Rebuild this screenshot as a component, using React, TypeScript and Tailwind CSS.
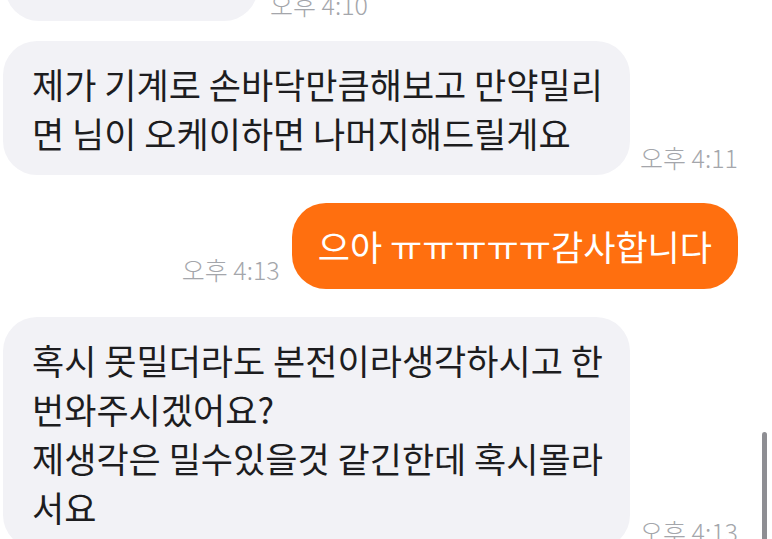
import type { ReactNode } from 'react';

/** Timestamp shown next to a chat bubble */
function Time({ children }: { children: ReactNode }) {
  return (
    <span className="text-[25px] font-light leading-none text-[#a4a6ab] whitespace-nowrap">
      {children}
    </span>
  );
}

/** Incoming (gray) bubble, lines are given explicitly */
function Incoming({ lines, time }: { lines: string[]; time: string }) {
  return (
    <div className="flex items-end gap-[10px] pl-[3px]">
      <div className="w-[627px] shrink-0 rounded-[34px] bg-[#f2f2f6] px-[29px] py-[18px] text-[35px] leading-[49px] text-[#1d1d1f]">
        {lines.map((l, i) => (
          <div key={i} className="whitespace-nowrap">{l}</div>
        ))}
      </div>
      <div className="pb-[2px]">
        <Time>{time}</Time>
      </div>
    </div>
  );
}

/** Outgoing (orange) bubble */
function Outgoing({ text, time }: { text: string; time: string }) {
  return (
    <div className="flex items-end justify-end gap-[12px] pr-[34px]">
      <div className="pb-[4px]">
        <Time>{time}</Time>
      </div>
      <div className="rounded-[34px] bg-[#ff6f0f] px-[26px] py-[18px] text-[35px] leading-[50px] text-white whitespace-nowrap">
        {text}
      </div>
    </div>
  );
}

export default function App() {
  return (
    <div
      className="relative h-[539px] w-[772px] overflow-hidden bg-white"
      style={{ fontFamily: '"Noto Sans CJK KR", "Noto Sans", sans-serif' }}
    >
      <div className="flex flex-col">
        {/* previous message, mostly scrolled away */}
        <div className="-mt-[60px] flex items-end gap-[12px] pl-[5px]">
          <div className="h-[81px] w-[253px] rounded-[34px] bg-[#f2f2f6]" />
          <div className="pb-[1px]">
            <Time>오후 4:10</Time>
          </div>
        </div>

        <div className="mt-[20px]">
          <Incoming
            lines={['제가 기계로 손바닥만큼해보고 만약밀리', '면 님이 오케이하면 나머지해드릴게요']}
            time="오후 4:11"
          />
        </div>

        <div className="mt-[28px]">
          <Outgoing text="으아 ㅠㅠㅠㅠㅠ감사합니다" time="오후 4:13" />
        </div>

        <div className="mt-[28px]">
          <Incoming
            lines={[
              '혹시 못밀더라도 본전이라생각하시고 한',
              '번와주시겠어요?',
              '제생각은 밀수있을것 같긴한데 혹시몰라',
              '서요',
            ]}
            time="오후 4:13"
          />
        </div>
      </div>

      {/* scroll indicator */}
      <div className="absolute right-[5px] top-[432px] h-[120px] w-[5px] rounded-full bg-[#8e8e93]" />
    </div>
  );
}
